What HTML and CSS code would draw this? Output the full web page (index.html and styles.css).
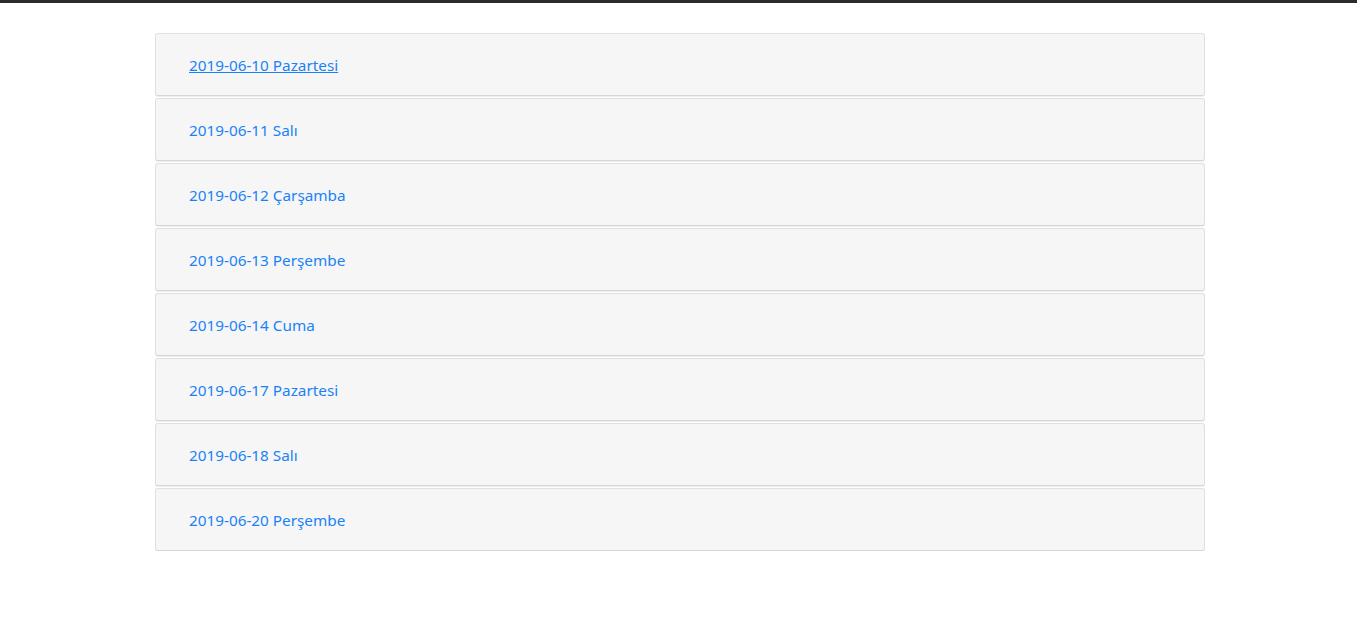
FILE: index.html
```html
<!DOCTYPE html>
<html lang="tr">
<head>
<meta charset="utf-8">
<title>Günler</title>
<link rel="stylesheet" href="styles.css">
</head>
<body>
<div class="topbar"></div>
<main class="list">
  <div class="panel"><a class="day active" href="#">2019-06-10 Pazartesi</a></div>
  <div class="panel"><a class="day" href="#">2019-06-11 Salı</a></div>
  <div class="panel"><a class="day" href="#">2019-06-12 Çarşamba</a></div>
  <div class="panel"><a class="day" href="#">2019-06-13 Perşembe</a></div>
  <div class="panel"><a class="day" href="#">2019-06-14 Cuma</a></div>
  <div class="panel"><a class="day" href="#">2019-06-17 Pazartesi</a></div>
  <div class="panel"><a class="day" href="#">2019-06-18 Salı</a></div>
  <div class="panel"><a class="day" href="#">2019-06-20 Perşembe</a></div>
</main>
</body>
</html>
```
FILE: styles.css
```css
html, body {
  margin: 0;
  padding: 0;
  background: #fff;
  font-family: "Noto Sans", "Open Sans", sans-serif;
}
.topbar {
  height: 3px;
  background: #2b2b2b;
}
.list {
  width: 1050px;
  margin: 30px 0 0 155px;
  display: flex;
  flex-direction: column;
  gap: 2px;
}
.panel {
  box-sizing: border-box;
  height: 63px;
  display: flex;
  align-items: center;
  padding: 1px 33px 0;
  background: #f6f6f6;
  border: 1px solid #e0e0e0;
  border-bottom-color: #d6d6d6;
  border-radius: 3px;
  box-shadow: 0 1px 1px rgba(0, 0, 0, 0.07);
}
.day {
  color: #1a82f7;
  text-decoration: none;
  font-size: 15.3px;
}
.day.active {
  text-decoration: underline;
}
```
